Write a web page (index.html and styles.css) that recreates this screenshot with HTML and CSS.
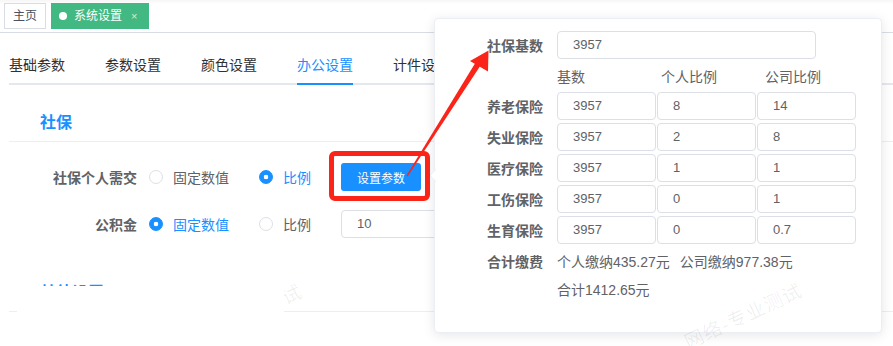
FILE: index.html
```html
<!DOCTYPE html>
<html lang="zh-CN">
<head>
<meta charset="utf-8">
<title>系统设置</title>
<link rel="stylesheet" href="styles.css">
</head>
<body>
<div class="page">
  <div class="tags-bar">
    <span class="tag">主页</span>
    <span class="tag tag-active"><i class="tag-dot"></i>系统设置<span class="tag-close">×</span></span>
  </div>

  <div class="tabs">
    <div class="tabs-nav">
      <div class="tab"><span>基础参数</span></div>
      <div class="tab"><span>参数设置</span></div>
      <div class="tab"><span>颜色设置</span></div>
      <div class="tab active"><span>办公设置</span></div>
      <div class="tab"><span>计件设置</span></div>
      <div class="tab"><span>考勤设置</span></div>
    </div>
  </div>

  <div class="content">
    <div class="section-title">社保</div>
    <div class="form">
      <div class="form-row">
        <label class="form-label">社保个人需交</label>
        <div class="radio"><span class="radio-dot"></span><span class="radio-text">固定数值</span></div>
        <div class="radio checked"><span class="radio-dot"></span><span class="radio-text">比例</span></div>
        <button class="btn">设置参数</button>
      </div>
      <div class="form-row">
        <label class="form-label">公积金</label>
        <div class="radio checked"><span class="radio-dot"></span><span class="radio-text">固定数值</span></div>
        <div class="radio"><span class="radio-dot"></span><span class="radio-text">比例</span></div>
        <div class="input">10</div>
      </div>
    </div>
    <div class="section-title section-second">其他设置</div>
  </div>

  <div class="popover">
    <span class="popover-arrow"></span>
    <div class="pop-row">
      <span class="pop-label">社保基数</span>
      <div class="pop-input wide">3957</div>
    </div>
    <div class="pop-head">
      <span class="pop-head-cell">基数</span>
      <span class="pop-head-cell">个人比例</span>
      <span>公司比例</span>
    </div>
    <div class="pop-rows">
      <div class="pop-row">
        <span class="pop-label">养老保险</span>
        <div class="pop-input">3957</div><div class="pop-input">8</div><div class="pop-input">14</div>
      </div>
      <div class="pop-row">
        <span class="pop-label">失业保险</span>
        <div class="pop-input">3957</div><div class="pop-input">2</div><div class="pop-input">8</div>
      </div>
      <div class="pop-row">
        <span class="pop-label">医疗保险</span>
        <div class="pop-input">3957</div><div class="pop-input">1</div><div class="pop-input">1</div>
      </div>
      <div class="pop-row">
        <span class="pop-label">工伤保险</span>
        <div class="pop-input">3957</div><div class="pop-input">0</div><div class="pop-input">1</div>
      </div>
      <div class="pop-row">
        <span class="pop-label">生育保险</span>
        <div class="pop-input">3957</div><div class="pop-input">0</div><div class="pop-input">0.7</div>
      </div>
    </div>
    <div class="pop-total">
      <span class="pop-label">合计缴费</span>
      <span class="pop-total-item">个人缴纳435.27元</span>
      <span>公司缴纳977.38元</span>
    </div>
    <div class="pop-total2">合计1412.65元</div>
  </div>

  <span class="wm wm-1">网络-专业测试</span>
  <span class="wm wm-2">网络-专业测试</span>
  <div class="mask"></div>

  <div class="red-box"></div>
  <svg class="annot" width="893" height="346" viewBox="0 0 893 346">
    <polygon points="406.5,175.5 407.5,176.5 481.5,64 476.5,61" fill="#fa2419"/>
    <polygon points="488.5,50.5 470,61 488,71.5" fill="#fa2419"/>
  </svg>
</div>
</body>
</html>
```

FILE: styles.css
```css
body {
  margin: 0;
  background: #fff;
  font-family: "Liberation Sans", "Noto Sans CJK SC", sans-serif;
  color: #606266;
}

.page {
  position: relative;
  width: 893px;
  height: 346px;
  overflow: hidden;
  background: #fff;
}

/* tags bar */
.tags-bar {
  height: 32px;
  border-bottom: 1px solid #d8dce5;
  display: flex;
  align-items: center;
  gap: 5px;
  padding-left: 4px;
  box-shadow: inset 0 4px 4px -3px rgba(0, 0, 0, 0.06);
}

.tag {
  height: 26px;
  box-sizing: border-box;
  border: 1px solid #d8dce5;
  padding: 0 8px;
  font-size: 12px;
  line-height: 24px;
  color: #495060;
  display: flex;
  align-items: center;
  background: #fff;
}

.tag-active {
  background: #42b983;
  border-color: #42b983;
  color: #fff;
  padding: 0 11px 0 7px;
}

.tag-dot {
  width: 8px;
  height: 8px;
  border-radius: 50%;
  background: #fff;
  margin-right: 7px;
}

.tag-close {
  margin-left: 9px;
  font-size: 11px;
  color: rgba(255, 255, 255, 0.75);
}

/* tabs */
.tabs {
  margin-top: 12px;
  padding-left: 9px;
}

.tabs-nav {
  display: flex;
  height: 40px;
  box-shadow: inset 0 -2px 0 #e4e7ed;
}

.tab {
  padding: 0 20px;
  font-size: 14px;
  line-height: 40px;
  color: #303133;
  white-space: nowrap;
}

.tab:first-child {
  padding-left: 0;
}

.tab span {
  display: block;
  height: 40px;
}

.tab.active span {
  color: #1890ff;
  box-shadow: inset 0 -2px 0 #1890ff;
}

/* content */
.content {
  padding-left: 9px;
}

.section-title {
  margin-top: 24px;
  padding: 0 0 4px 31px;
  height: 28px;
  line-height: 28px;
  font-size: 16px;
  font-weight: bold;
  color: #1890ff;
  border-bottom: 1px solid #ebeef5;
}

.section-second {
  margin-top: 35px;
}

.form {
  padding-top: 15px;
  display: flex;
  flex-direction: column;
  gap: 7px;
}

.form-row {
  display: flex;
  align-items: center;
  height: 40px;
}

.form-label {
  width: 128px;
  padding-right: 12px;
  text-align: right;
  font-size: 14px;
  font-weight: bold;
  color: #606266;
}

.radio {
  display: flex;
  align-items: center;
  margin-right: 30px;
  font-size: 14px;
  color: #606266;
}

.radio-dot {
  width: 14px;
  height: 14px;
  box-sizing: border-box;
  border: 1px solid #dcdfe6;
  border-radius: 50%;
  margin-right: 10px;
  background: #fff;
}

.radio.checked .radio-dot {
  border-color: #1890ff;
  background: radial-gradient(circle, #fff 0, #fff 2px, #1890ff 2.6px);
}

.radio.checked .radio-text {
  color: #1890ff;
}

.btn {
  width: 80px;
  height: 28px;
  padding: 0;
  border: 0;
  border-radius: 3px;
  background: #1890ff;
  color: #fff;
  font-size: 12px;
  font-family: inherit;
}

.input {
  width: 200px;
  height: 28px;
  box-sizing: border-box;
  border: 1px solid #dcdfe6;
  border-radius: 4px;
  padding: 0 15px;
  font-size: 13px;
  line-height: 26px;
  color: #606266;
}

/* popover */
.popover {
  position: absolute;
  left: 434px;
  top: 18px;
  width: 448px;
  height: 315px;
  box-sizing: border-box;
  background: #fff;
  border: 1px solid #ebeef5;
  border-radius: 4px;
  box-shadow: 0 2px 12px 0 rgba(0, 0, 0, 0.1);
  padding-top: 12px;
  z-index: 2;
}

.popover-arrow {
  position: absolute;
  left: -4px;
  top: 152px;
  width: 8px;
  height: 8px;
  background: #fff;
  border-left: 1px solid #ebeef5;
  border-bottom: 1px solid #ebeef5;
  transform: rotate(45deg);
}

.pop-row {
  display: flex;
  align-items: center;
  height: 28px;
}

.pop-label {
  width: 108px;
  margin-right: 14px;
  text-align: right;
  font-size: 14px;
  font-weight: bold;
  color: #606266;
  flex-shrink: 0;
}

.pop-input {
  width: 99px;
  height: 28px;
  box-sizing: border-box;
  border: 1px solid #dcdfe6;
  border-radius: 4px;
  padding: 0 15px;
  margin-right: 1px;
  font-size: 13px;
  line-height: 26px;
  color: #606266;
}

.pop-input.wide {
  width: 259px;
}

.pop-head {
  height: 33px;
  box-sizing: border-box;
  padding: 4px 0 0 122px;
  line-height: 28px;
  font-size: 14px;
  color: #606266;
  display: flex;
}

.pop-head-cell {
  width: 104px;
}

.pop-rows {
  display: flex;
  flex-direction: column;
  gap: 3px;
}

.pop-total {
  margin-top: 8px;
  display: flex;
  line-height: 20px;
  font-size: 14px;
  color: #606266;
}

.pop-total-item {
  margin-right: 10px;
}

.pop-total2 {
  margin-top: 8px;
  padding-left: 122px;
  line-height: 20px;
  font-size: 14px;
  color: #606266;
}

/* watermark + mask */
.wm {
  position: absolute;
  font-size: 19px;
  line-height: 24px;
  letter-spacing: 1px;
  color: rgba(0, 0, 0, 0.065);
  white-space: nowrap;
  transform: rotate(-25deg);
  transform-origin: 100% 50%;
  z-index: 3;
}

.wm-1 {
  left: 174px;
  top: 279px;
}

.wm-2 {
  left: 674px;
  top: 278px;
}

.mask {
  position: absolute;
  left: 17px;
  top: 285.5px;
  width: 267px;
  height: 61px;
  background: #fff;
  z-index: 4;
}

/* annotations */
.red-box {
  position: absolute;
  left: 329px;
  top: 151px;
  width: 101px;
  height: 50px;
  box-sizing: border-box;
  border: 5px solid #fa2419;
  border-radius: 6px;
  z-index: 5;
}

.annot {
  position: absolute;
  left: 0;
  top: 0;
  z-index: 6;
  pointer-events: none;
}
```
